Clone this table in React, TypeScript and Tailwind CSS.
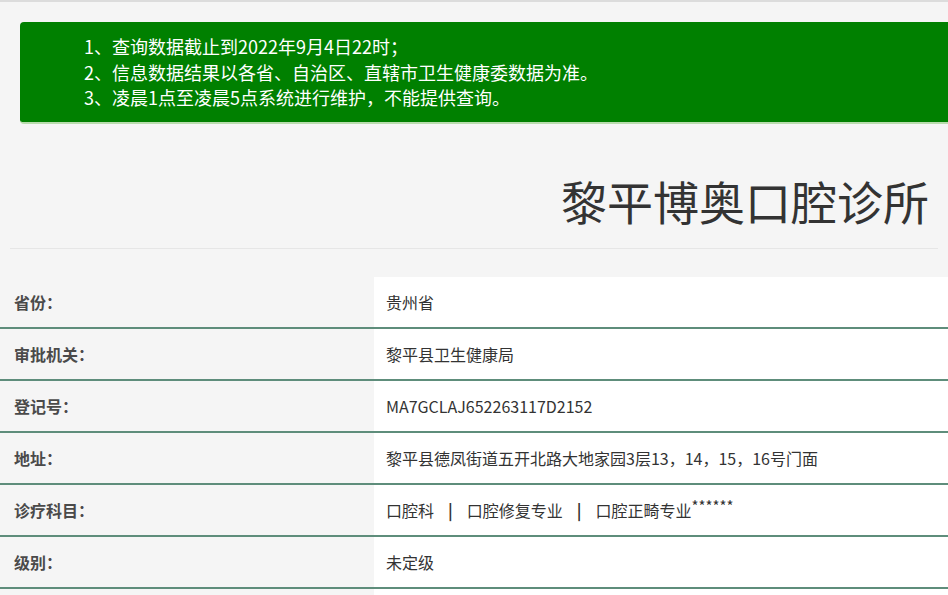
const notices = [
  "1、查询数据截止到2022年9月4日22时；",
  "2、信息数据结果以各省、自治区、直辖市卫生健康委数据为准。",
  "3、凌晨1点至凌晨5点系统进行维护，不能提供查询。",
];

const subjects = ["口腔科", "口腔修复专业", "口腔正畸专业"];

const rows = [
  { label: "省份：", value: "贵州省" },
  { label: "审批机关：", value: "黎平县卫生健康局" },
  { label: "登记号：", value: "MA7GCLAJ652263117D2152" },
  { label: "地址：", value: "黎平县德凤街道五开北路大地家园3层13，14，15，16号门面" },
  { label: "诊疗科目：", value: null },
  { label: "级别：", value: "未定级" },
];

function Subjects() {
  return (
    <span className="flex items-center">
      {subjects.map((s, i) => (
        <span key={s} className="flex items-center">
          {i > 0 && <span className="mx-[14px] font-bold text-[#333]">|</span>}
          {s}
        </span>
      ))}
      <span className="relative -top-[3px] text-[15px]">******</span>
    </span>
  );
}

export default function App() {
  return (
    <div
      className="min-h-screen bg-[#f5f5f5] border-t-2 border-[#dcdcdc] overflow-hidden"
      style={{ fontFamily: '"Microsoft YaHei", "Noto Sans CJK SC", sans-serif' }}
    >
      {/* notice */}
      <div className="ml-[20px] mt-[20px] rounded-l-[4px] bg-[#008000] border-b-2 border-[#b9dcae] pl-[64px] pt-[12px] pb-[11px] text-[18px] leading-[25.5px] text-white">
        {notices.map((n) => (
          <p key={n}>{n}</p>
        ))}
      </div>

      {/* title */}
      <div className="mx-[10px] mt-[48px] pb-[20px] border-b border-[#e6e6e6] flex justify-end">
        <h1 className="pr-[9px] text-[46px] leading-[56px] text-[#333]">黎平博奥口腔诊所</h1>
      </div>

      {/* detail table */}
      <div className="mt-[28px]">
        {rows.map((r) => (
          <div key={r.label} className="flex h-[52px] border-b-2 border-[#5e8d7b]">
            <div className="w-[374px] shrink-0 pl-[14px] flex items-center text-[16px] font-bold text-[#4a4a4a]">
              {r.label}
            </div>
            <div className="flex-1 bg-white pl-[12px] flex items-center text-[16px] text-[#333]">
              {r.value ?? <Subjects />}
            </div>
          </div>
        ))}
        <div className="flex h-[52px]">
          <div className="w-[374px] shrink-0" />
          <div className="flex-1 bg-white" />
        </div>
      </div>
    </div>
  );
}
